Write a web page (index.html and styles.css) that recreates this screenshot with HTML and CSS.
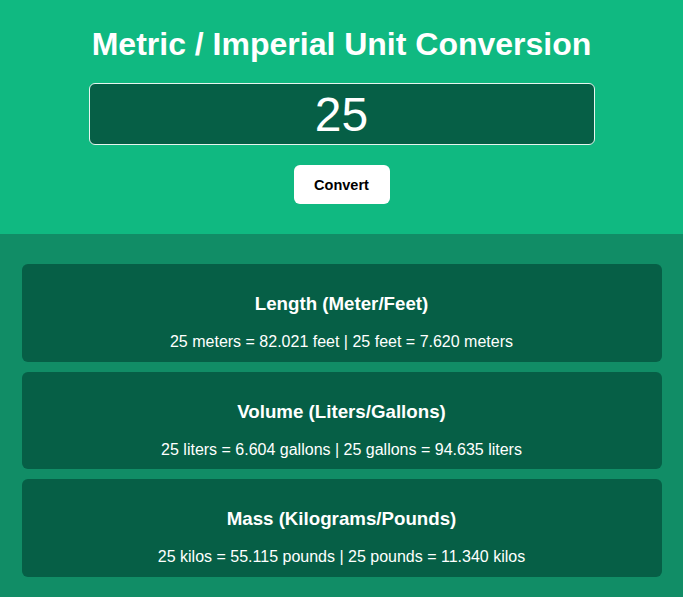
FILE: index.html
```html
<!DOCTYPE html>
<html lang="en">
<head>
<meta charset="utf-8">
<title>Metric / Imperial Unit Conversion</title>
<link rel="stylesheet" href="styles.css">
</head>
<body>
<header class="top">
  <h1 class="title">Metric / Imperial Unit Conversion</h1>
  <input class="num-input" type="text" value="25">
  <button class="convert-btn" type="button">Convert</button>
</header>
<main class="results">
  <section class="card">
    <h3 class="card-title">Length (Meter/Feet)</h3>
    <p class="card-text">25 meters = 82.021 feet | 25 feet = 7.620 meters</p>
  </section>
  <section class="card">
    <h3 class="card-title">Volume (Liters/Gallons)</h3>
    <p class="card-text">25 liters = 6.604 gallons | 25 gallons = 94.635 liters</p>
  </section>
  <section class="card">
    <h3 class="card-title">Mass (Kilograms/Pounds)</h3>
    <p class="card-text">25 kilos = 55.115 pounds | 25 pounds = 11.340 kilos</p>
  </section>
</main>
</body>
</html>
```

FILE: styles.css
```css
* { box-sizing: border-box; }
html, body {
  margin: 0;
  padding: 0;
  height: 100%;
}
body {
  font-family: "Liberation Sans", Arial, sans-serif;
  background: #118d66;
  color: #fff;
}
.top {
  background: #10b981;
  display: flex;
  flex-direction: column;
  align-items: center;
  padding: 26px 0 30px;
}
.title {
  margin: 0 0 20px;
  font-size: 32px;
  line-height: 37px;
  font-weight: bold;
}
.num-input {
  width: 506px;
  height: 62px;
  margin: 0 0 20px;
  background: #065f46;
  border: 1px solid #e6f5ef;
  border-radius: 6px;
  color: #fff;
  font-family: "Liberation Sans", Arial, sans-serif;
  font-size: 48px;
  text-align: center;
  padding: 0;
  outline: none;
}
.convert-btn {
  width: 96px;
  height: 39px;
  background: #fff;
  border: none;
  border-radius: 6px;
  color: #000;
  font-family: "Liberation Sans", Arial, sans-serif;
  font-size: 14.5px;
  font-weight: bold;
  padding: 0;
}
.results {
  padding: 30px 21px 21px;
  display: flex;
  flex-direction: column;
  gap: 10px;
  align-items: center;
}
.card {
  width: 640px;
  height: 97.5px;
  background: #065f46;
  border-radius: 6px;
  text-align: center;
  padding: 29px 10px 0;
}
.card-title {
  margin: 0 0 18px;
  font-size: 18.72px;
  line-height: 22px;
  font-weight: bold;
}
.card-text {
  margin: 0;
  font-size: 16px;
  line-height: 18px;
}
```
